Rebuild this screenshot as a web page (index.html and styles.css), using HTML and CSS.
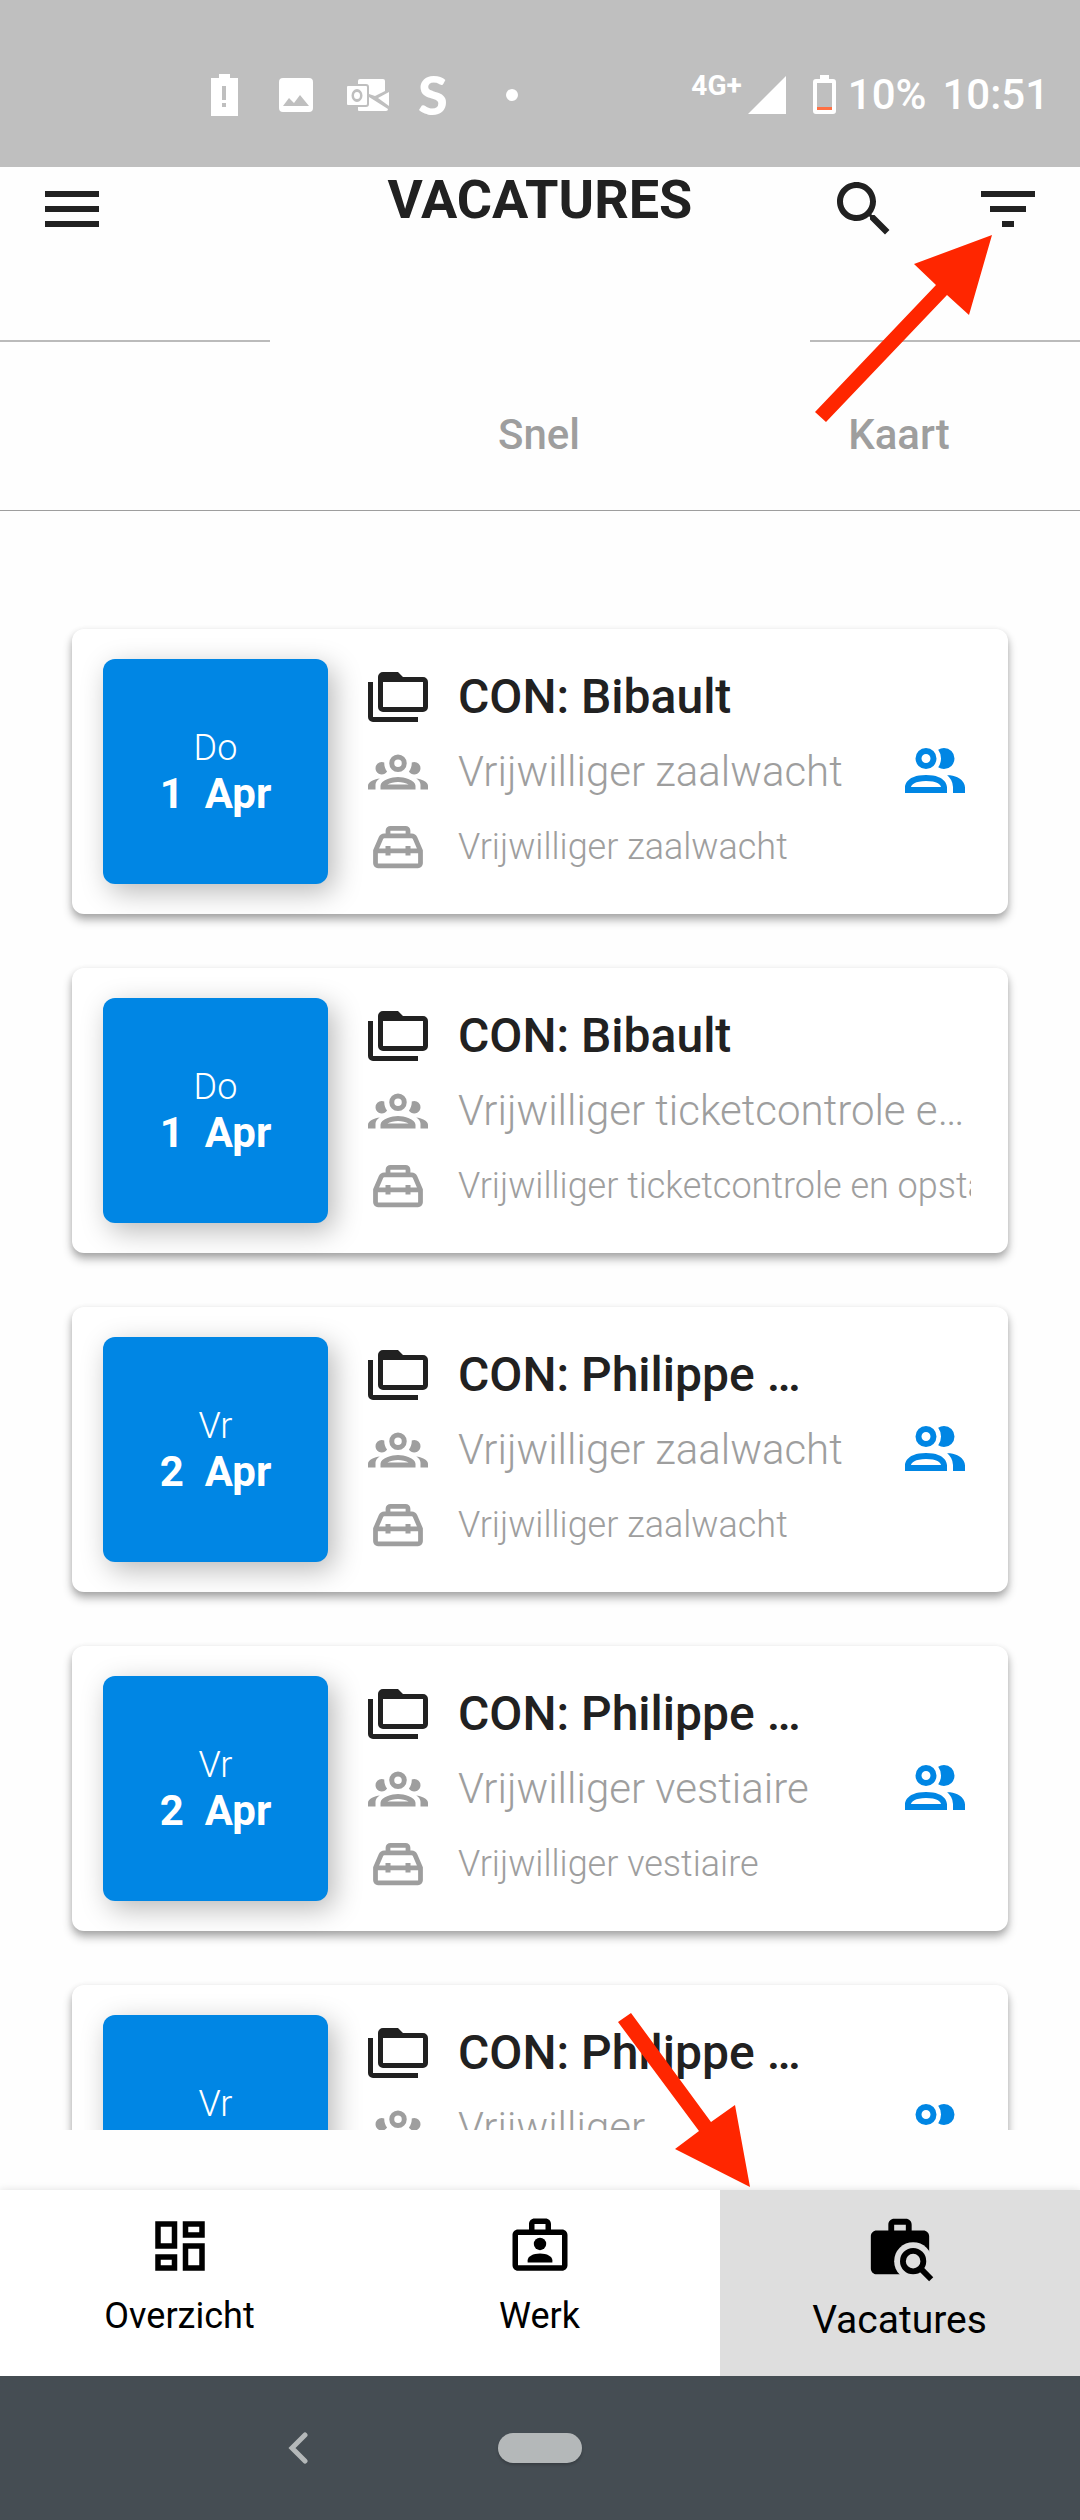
FILE: index.html
```html
<!DOCTYPE html>
<html lang="nl">
<head>
<meta charset="utf-8">
<meta name="viewport" content="width=device-width, initial-scale=1">
<title>Vacatures</title>
<link rel="stylesheet" href="styles.css">
</head>
<body>
<svg class="sprite" aria-hidden="true">
  <symbol id="folders" viewBox="0 0 24 24"><path d="M22,4A2,2 0 0,1 24,6V16A2,2 0 0,1 22,18H6A2,2 0 0,1 4,16V4A2,2 0 0,1 6,2H12L14,4H22M2,6V20H20V22H2A2,2 0 0,1 0,20V6H2M6,6V16H22V6H6Z"/></symbol>
  <symbol id="group" viewBox="0 0 24 24"><path d="M12,5A3.5,3.5 0 0,0 8.5,8.5A3.5,3.5 0 0,0 12,12A3.5,3.5 0 0,0 15.5,8.5A3.5,3.5 0 0,0 12,5M12,7A1.5,1.5 0 0,1 13.5,8.5A1.5,1.5 0 0,1 12,10A1.5,1.5 0 0,1 10.5,8.5A1.5,1.5 0 0,1 12,7M5.5,8A2.5,2.5 0 0,0 3,10.5C3,11.44 3.53,12.25 4.29,12.68C4.65,12.88 5.06,13 5.5,13C5.94,13 6.35,12.88 6.71,12.68C7.08,12.47 7.39,12.17 7.62,11.81C6.89,10.86 6.5,9.7 6.5,8.5C6.5,8.41 6.5,8.31 6.5,8.22C6.2,8.08 5.86,8 5.5,8M18.5,8C18.14,8 17.8,8.08 17.5,8.22C17.5,8.31 17.5,8.41 17.5,8.5C17.5,9.7 17.11,10.86 16.38,11.81C16.5,12 16.63,12.15 16.78,12.3C16.94,12.45 17.1,12.58 17.29,12.68C17.65,12.88 18.06,13 18.5,13C18.94,13 19.35,12.88 19.71,12.68C20.47,12.25 21,11.44 21,10.5A2.5,2.5 0 0,0 18.5,8M12,14C9.66,14 5,15.17 5,17.5V19H19V17.5C19,15.17 14.34,14 12,14M4.71,14.55C2.78,14.78 0,15.76 0,17.5V19H3V17.07C3,16.06 3.69,15.22 4.71,14.55M19.29,14.55C20.31,15.22 21,16.06 21,17.07V19H24V17.5C24,15.76 21.22,14.78 19.29,14.55M12,16C13.53,16 15.24,16.5 16.23,17H7.77C8.76,16.5 10.47,16 12,16Z"/></symbol>
  <symbol id="toolbox" viewBox="0 0 24 24"><path fill="none" stroke="currentColor" stroke-width="1.9" d="M8 7.500V5.500A1 1 0 0 1 9 4.500H15A1 1 0 0 1 16 5.500V7.500M3 13.500L5.200 8.400Q5.600 7.500 6.500 7.500H17.500Q18.400 7.500 18.800 8.400L21 13.500V18.500A1 1 0 0 1 20 19.500H4A1 1 0 0 1 3 18.500ZM3 13.500H21"/><path d="M7 11.600H9V15.400H7ZM15 11.600H17V15.400H15Z"/></symbol>
  <symbol id="people" viewBox="0 0 24 24"><path d="M13.07 10.41A5 5 0 0 0 13.07 4.59A3.39 3.39 0 0 1 15 4A3.5 3.5 0 0 1 15 11A3.39 3.39 0 0 1 13.07 10.41M5.5 7.5A3.5 3.5 0 1 1 9 11A3.5 3.5 0 0 1 5.5 7.5M7.5 7.5A1.5 1.5 0 1 0 9 6A1.5 1.5 0 0 0 7.5 7.5M16 17V19H2V17S2 13 9 13 16 17 16 17M14 17C13.86 16.22 12.67 15 9 15S4.07 16.31 4 17M15.95 13A5.32 5.32 0 0 1 18 17V19H22V17S22 13.37 15.94 13Z"/></symbol>
</svg>

<div class="screen">
  <div class="status">
    <div class="status-left">
      <svg class="s-alert" viewBox="0 0 27 42"><path fill-rule="evenodd" d="M8 0H19V4H27V42H0V4H8ZM11 12V26H15V12ZM11 29V33H15V29Z"/></svg>
      <svg class="s-image" viewBox="0 0 34 34"><path fill-rule="evenodd" d="M4 0H30A4 4 0 0 1 34 4V30A4 4 0 0 1 30 34H4A4 4 0 0 1 0 30V4A4 4 0 0 1 4 0ZM4 28H30L21 17L15 25L10 20Z"/></svg>
      <svg class="s-mail" viewBox="0 0 42 32"><path fill-rule="evenodd" d="M1 7H19Q20 7 20 8V25Q20 26 19 26H1Q0 26 0 25V8Q0 7 1 7ZM10 10A5.500 6.500 0 0 0 10 23A5.500 6.500 0 0 0 10 10ZM10 13A3 3.500 0 0 1 10 20A3 3.500 0 0 1 10 13ZM11 5V2Q11 0 13 0H36Q38 0 38 2V12L28 17L22 15V8Q22 5 19 5ZM42 13V27L31 19ZM22 18L41 30Q41 32 39 32H12Q11 32 11 31V28H19Q22 28 22 25Z"/></svg>
      <span class="s-letter">S</span>
      <span class="s-dot"></span>
    </div>
    <div class="status-right">
      <span class="net">4G+</span>
      <svg class="s-signal" viewBox="0 0 38 38"><path d="M38 0V38H0Z"/></svg>
      <svg class="s-battery" viewBox="0 0 23 39"><path fill-rule="evenodd" d="M7 0H16V4H20Q23 4 23 7V36Q23 39 20 39H3Q0 39 0 36V7Q0 4 3 4H7ZM4 8V35H19V8Z"/><path fill="#ff7043" d="M4 32H19V35H4Z"/></svg>
      <span>10%</span>
      <span>10:51</span>
    </div>
  </div>

  <header class="header">
    <button class="icon-button" aria-label="Menu"><svg viewBox="0 0 24 24"><path d="M3 6H21V8H3ZM3 11H21V13H3ZM3 16H21V18H3Z"/></svg></button>
    <h1 class="title">VACATURES</h1>
    <div class="actions">
      <button class="icon-button" aria-label="Zoeken"><svg viewBox="0 0 24 24"><path d="M15.5 14h-.79l-.28-.27C15.41 12.59 16 11.11 16 9.5 16 5.91 13.09 3 9.5 3S3 5.91 3 9.5 5.91 16 9.5 16c1.610 0 3.090-.59 4.230-1.570l.27.28v.79l5 4.990L20.490 19l-4.990-5zM9.500 14C7.010 14 5 11.990 5 9.500S7.010 5 9.500 5 14 7.010 14 9.500 11.990 14 9.500 14z"/></svg></button>
      <button class="icon-button" aria-label="Filter"><svg viewBox="0 0 24 24"><path d="M10 18H14V16H10ZM3 6V8H21V6ZM6 13H18V11H6Z"/></svg></button>
    </div>
    <svg class="arrow arrow-filter" viewBox="0 0 177 188" aria-hidden="true"><path d="M177 0L99 29L121 50L0 177L11 187L132 60L154 80Z"/></svg>
  </header>

  <div class="rule"></div>
  <div class="tabs" role="tablist">
    <button class="tab" role="tab" aria-selected="true" aria-label="Lijst"></button>
    <button class="tab" role="tab">Snel</button>
    <button class="tab" role="tab">Kaart</button>
  </div>

  <main class="list">
    <article class="card">
      <div class="date"><span class="weekday">Do</span><span class="day">1&nbsp; Apr</span></div>
      <div class="info">
        <h2 class="row name"><svg><use href="#folders"/></svg><span>CON: Bibault</span></h2>
        <p class="row role"><svg><use href="#group"/></svg><span>Vrijwilliger zaalwacht</span></p>
        <p class="row task"><svg><use href="#toolbox"/></svg><span>Vrijwilliger zaalwacht</span></p>
      </div>
      <svg class="people"><use href="#people"/></svg>
    </article>
    <article class="card">
      <div class="date"><span class="weekday">Do</span><span class="day">1&nbsp; Apr</span></div>
      <div class="info">
        <h2 class="row name"><svg><use href="#folders"/></svg><span>CON: Bibault</span></h2>
        <p class="row role"><svg><use href="#group"/></svg><span>Vrijwilliger ticketcontrole e…</span></p>
        <p class="row task"><svg><use href="#toolbox"/></svg><span>Vrijwilliger ticketcontrole en opsta</span></p>
      </div>
    </article>
    <article class="card">
      <div class="date"><span class="weekday">Vr</span><span class="day">2&nbsp; Apr</span></div>
      <div class="info">
        <h2 class="row name"><svg><use href="#folders"/></svg><span>CON: Philippe …</span></h2>
        <p class="row role"><svg><use href="#group"/></svg><span>Vrijwilliger zaalwacht</span></p>
        <p class="row task"><svg><use href="#toolbox"/></svg><span>Vrijwilliger zaalwacht</span></p>
      </div>
      <svg class="people"><use href="#people"/></svg>
    </article>
    <article class="card">
      <div class="date"><span class="weekday">Vr</span><span class="day">2&nbsp; Apr</span></div>
      <div class="info">
        <h2 class="row name"><svg><use href="#folders"/></svg><span>CON: Philippe …</span></h2>
        <p class="row role"><svg><use href="#group"/></svg><span>Vrijwilliger vestiaire</span></p>
        <p class="row task"><svg><use href="#toolbox"/></svg><span>Vrijwilliger vestiaire</span></p>
      </div>
      <svg class="people"><use href="#people"/></svg>
    </article>
    <article class="card">
      <div class="date"><span class="weekday">Vr</span></div>
      <div class="info">
        <h2 class="row name"><svg><use href="#folders"/></svg><span>CON: Philippe …</span></h2>
        <p class="row role"><svg><use href="#group"/></svg><span>Vrijwilliger</span></p>
      </div>
      <svg class="people"><use href="#people"/></svg>
    </article>
  </main>

  <nav class="bottom-nav">
    <a class="nav-item" href="#overzicht">
      <svg viewBox="0 0 24 24"><path d="M19,5V7H15V5H19M9,5V11H5V5H9M19,13V19H15V13H19M9,17V19H5V17H9M21,3H13V9H21V3M11,3H3V13H11V3M21,11H13V21H21V11M11,15H3V21H11V15Z"/></svg>
      <span>Overzicht</span>
    </a>
    <a class="nav-item" href="#werk">
      <svg viewBox="0 0 24 24"><path fill-rule="evenodd" d="M20 6H16V4C16 2.890 15.110 2 14 2H10C8.890 2 8 2.890 8 4V6H4C2.890 6 2 6.890 2 8V19C2 20.110 2.890 21 4 21H20C21.110 21 22 20.110 22 19V8C22 6.890 21.110 6 20 6M10 4H14V6H10V4M20 19H4V8H20V19"/><circle cx="12" cy="11.250" r="2.250"/><path d="M16.500 18H7.500V17.200C7.500 15.700 9.500 14.700 12 14.700S16.500 15.700 16.500 17.200Z"/></svg>
      <span>Werk</span>
    </a>
    <a class="nav-item active" href="#vacatures" aria-current="page">
      <svg viewBox="0 0 24 24"><mask id="lens"><path fill="#fff" d="M0 0H24V24H0Z"/><circle cx="16.500" cy="16.500" r="6.500" fill="#000"/><path fill="#000" d="M12 19H24V24H12Z"/></mask><path mask="url(#lens)" fill-rule="evenodd" d="M20 6H16V4C16 2.890 15.110 2 14 2H10C8.890 2 8 2.890 8 4V6H4C2.890 6 2 6.890 2 8V19C2 20.110 2.890 21 4 21H20C21.110 21 22 20.110 22 19V8C22 6.890 21.110 6 20 6M10 4H14V6H10V4"/><circle cx="16.500" cy="16.500" r="3.500" fill="none" stroke="currentColor" stroke-width="2"/><path fill="none" stroke="currentColor" stroke-width="2" d="M19 19L22.700 22.700"/></svg>
      <span>Vacatures</span>
    </a>
    <svg class="arrow arrow-nav" viewBox="0 0 132 174" aria-hidden="true"><path d="M132 174L117 92L93 109L13 0L0 9L81 118L57 136Z"/></svg>
  </nav>

  <div class="system-nav">
    <button class="sys-button" aria-label="Terug"><svg class="back" viewBox="0 0 20 32"><path d="M17 3L4 16L17 29"/></svg></button>
    <button class="sys-button" aria-label="Startscherm"><span class="pill"></span></button>
  </div>
</div>
</body>
</html>
```
FILE: styles.css
```css
* { box-sizing: border-box; }
body {
  margin: 0;
  background: #fefefe;
  color: #212121;
  font-family: Roboto, "Liberation Sans", sans-serif;
}
button {
  padding: 0;
  border: 0;
  background: none;
  color: inherit;
  font: inherit;
}
svg { display: block; flex: none; fill: currentColor; }
.sprite { position: absolute; width: 0; height: 0; }

.screen {
  display: flex;
  flex-direction: column;
  height: 100vh;
  overflow: hidden;
}

/* Status bar */
.status {
  display: flex;
  flex: none;
  justify-content: space-between;
  align-items: center;
  height: 167px;
  padding: 22px 31px 0 211px;
  background: #bfbfbf;
  color: #fff;
  font-size: 42px;
  font-weight: 500;
  line-height: 48px;
}
.status-left, .status-right { display: flex; align-items: center; }
.s-alert { width: 27px; height: 42px; margin-right: 41px; }
.s-image { width: 34px; height: 34px; margin-right: 34px; }
.s-mail { width: 42px; height: 32px; margin-right: 29px; }
.s-letter {
  width: 30px;
  font-family: Lato, sans-serif;
  font-size: 54px;
  font-weight: 900;
  line-height: 48px;
}
.s-dot { width: 12px; height: 12px; margin-left: 58px; border-radius: 50%; background: #fff; }
.net { align-self: flex-start; margin-right: 6px; font-size: 28px; font-weight: 700; line-height: 30px; }
.s-signal { width: 38px; height: 38px; margin-right: 27px; }
.s-battery { width: 23px; height: 39px; margin-right: 12px; }
.status-right span + span { margin-left: 16px; }

/* Header */
.header {
  position: relative;
  display: grid;
  flex: none;
  grid-template-columns: 1fr auto 1fr;
  align-items: start;
  min-height: 173px;
  padding: 6px 36px;
}
.icon-button, .icon-button svg { width: 72px; height: 72px; }
.title { margin: 0; font-size: 54px; font-weight: 700; line-height: 54px; }
.actions { display: flex; justify-content: flex-end; gap: 72px; }

.arrow { position: absolute; z-index: 2; color: #ff2600; pointer-events: none; }
.arrow-filter { top: 68px; right: 88px; width: 177px; height: 188px; }
.arrow-nav { top: -177px; left: 618px; width: 132px; height: 174px; }

/* Tabs */
.rule { display: flex; flex: none; justify-content: space-between; height: 2px; }
.rule::before, .rule::after { width: 25%; background: #bbb; content: ""; }
.tabs {
  display: grid;
  flex: none;
  grid-template-columns: repeat(3, 1fr);
  height: 169px;
  border-bottom: 1px solid #9e9e9e;
}
.tab { padding: 16px 2px 0 0; color: #9e9e9e; font-size: 42px; font-weight: 500; }

/* Vacancy list */
.list {
  display: flex;
  flex: 1;
  flex-direction: column;
  gap: 54px;
  min-height: 0;
  margin-bottom: 60px;
  padding: 118px 72px 0;
  overflow: hidden;
}
.card {
  display: flex;
  flex: none;
  align-items: center;
  padding: 30px 37px 30px 31px;
  border-radius: 12px;
  background: #fff;
  box-shadow: 0 6px 10px rgba(0, 0, 0, .3), 0 2px 6px rgba(0, 0, 0, .1);
}
.date {
  display: flex;
  flex: none;
  flex-direction: column;
  align-items: center;
  justify-content: center;
  width: 225px;
  height: 225px;
  border-radius: 12px;
  background: #0086e4;
  box-shadow: 6px 8px 28px rgba(0, 0, 0, .28);
  color: #fff;
}
.weekday { font-size: 36px; font-weight: 300; line-height: 44px; }
.day { min-height: 48px; font-size: 42px; font-weight: 700; line-height: 48px; }
.date .weekday:only-child { margin-bottom: 48px; }
.info { flex: 1; align-self: flex-start; min-width: 0; margin-left: 40px; }
.row {
  display: flex;
  align-items: center;
  gap: 30px;
  height: 75px;
  margin: 0;
  color: #9e9e9e;
  font-weight: 300;
}
.row svg { width: 60px; height: 60px; }
.row span { min-width: 0; overflow: hidden; white-space: nowrap; }
.name { color: #212121; font-size: 48px; font-weight: 500; }
.role { font-size: 42px; }
.role span { text-overflow: ellipsis; }
.task { font-size: 36px; }
.people { width: 72px; height: 72px; color: #0086e4; }

/* Bottom navigation */
.bottom-nav {
  position: relative;
  display: grid;
  flex: none;
  grid-template-columns: repeat(3, 1fr);
  height: 186px;
  background: #fff;
  box-shadow: 0 0 8px rgba(0, 0, 0, .12);
}
.nav-item {
  display: flex;
  flex-direction: column;
  align-items: center;
  gap: 16px;
  padding: 23px 1px 0 0;
  color: #000;
  font-size: 36px;
  line-height: 42px;
  text-decoration: none;
}
.nav-item svg { width: 66px; height: 66px; }
.nav-item.active { background: #dedede; font-size: 39px; }
.nav-item.active svg { width: 70px; height: 70px; }

/* System navigation */
.system-nav {
  position: relative;
  display: grid;
  flex: none;
  grid-template-columns: 1fr 84px 1fr;
  align-items: center;
  height: 144px;
  background: #454d53;
}
.sys-button { display: flex; }
.sys-button:first-child { justify-content: flex-end; padding-right: 190px; }
.back { width: 20px; height: 32px; fill: none; stroke: #b4b8b9; stroke-width: 5; stroke-linecap: round; }
.pill { width: 84px; height: 30px; border-radius: 15px; background: #b4b8b9; box-shadow: 0 2px 3px rgba(0, 0, 0, .2); }
```
